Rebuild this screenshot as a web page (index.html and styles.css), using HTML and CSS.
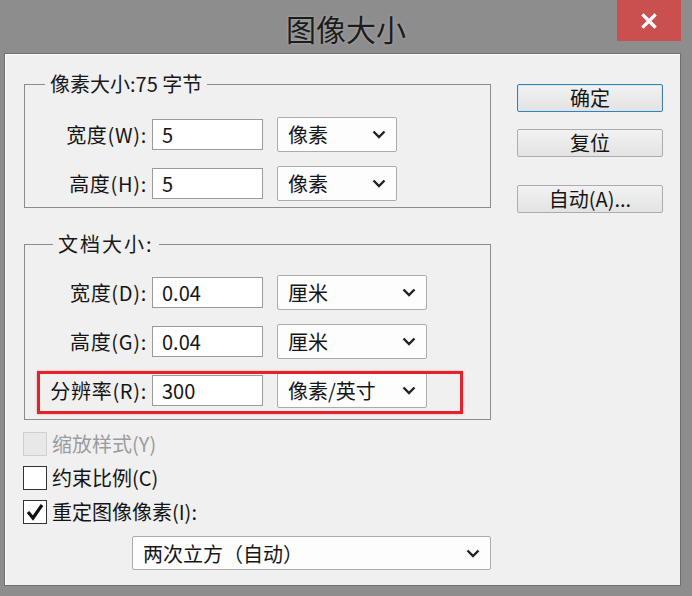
FILE: index.html
```html
<!DOCTYPE html>
<html lang="zh-CN">
<head>
<meta charset="utf-8">
<title>图像大小</title>
<link rel="stylesheet" href="styles.css">
</head>
<body>
<header class="titlebar">
  <h1 class="title">图像大小</h1>
  <button class="close" aria-label="关闭">
    <svg width="16" height="16" viewBox="0 0 16 16"><path d="M2.5 2.5L13.5 13.5M13.5 2.5L2.5 13.5" stroke="#fff" stroke-width="3.2" stroke-linecap="square"/></svg>
  </button>
</header>
<main class="dialog">
  <div class="left">
    <fieldset class="group g1">
      <legend>像素大小:75 字节</legend>
      <div class="rows">
        <div class="row">
          <span class="lbl">宽度(W):</span>
          <span class="input">5</span>
          <span class="select s-short"><span>像素</span><svg class="chev" width="14" height="9" viewBox="0 0 14 9"><polyline points="1.5,1.5 7,7 12.5,1.5" fill="none" stroke="#222" stroke-width="2.4"/></svg></span>
        </div>
        <div class="row">
          <span class="lbl">高度(H):</span>
          <span class="input">5</span>
          <span class="select s-short"><span>像素</span><svg class="chev" width="14" height="9" viewBox="0 0 14 9"><polyline points="1.5,1.5 7,7 12.5,1.5" fill="none" stroke="#222" stroke-width="2.4"/></svg></span>
        </div>
      </div>
    </fieldset>
    <fieldset class="group g2">
      <legend>文档大小:</legend>
      <div class="rows">
        <div class="row">
          <span class="lbl">宽度(D):</span>
          <span class="input">0.04</span>
          <span class="select s-long"><span>厘米</span><svg class="chev" width="14" height="9" viewBox="0 0 14 9"><polyline points="1.5,1.5 7,7 12.5,1.5" fill="none" stroke="#222" stroke-width="2.4"/></svg></span>
        </div>
        <div class="row">
          <span class="lbl">高度(G):</span>
          <span class="input">0.04</span>
          <span class="select s-long"><span>厘米</span><svg class="chev" width="14" height="9" viewBox="0 0 14 9"><polyline points="1.5,1.5 7,7 12.5,1.5" fill="none" stroke="#222" stroke-width="2.4"/></svg></span>
        </div>
        <div class="row marked">
          <span class="lbl">分辨率(R):</span>
          <span class="input">300</span>
          <span class="select s-long"><span>像素/英寸</span><svg class="chev" width="14" height="9" viewBox="0 0 14 9"><polyline points="1.5,1.5 7,7 12.5,1.5" fill="none" stroke="#222" stroke-width="2.4"/></svg></span>
          <span class="highlight"></span>
        </div>
      </div>
    </fieldset>
    <div class="checks">
      <div class="check disabled"><span class="box"></span><span class="ctext">缩放样式(Y)</span></div>
      <div class="check"><span class="box"></span><span class="ctext">约束比例(C)</span></div>
      <div class="check"><span class="box"><svg width="22" height="22" viewBox="0 0 22 22"><polyline points="4,11 9,17 18,4" fill="none" stroke="#111" stroke-width="3.2"/></svg></span><span class="ctext">重定图像像素(I):</span></div>
    </div>
    <span class="select s-bottom"><span>两次立方（自动）</span><svg class="chev" width="14" height="9" viewBox="0 0 14 9"><polyline points="1.5,1.5 7,7 12.5,1.5" fill="none" stroke="#222" stroke-width="2.4"/></svg></span>
  </div>
  <div class="buttons">
    <button class="btn default">确定</button>
    <button class="btn reset">复位</button>
    <button class="btn auto">自动(A)...</button>
  </div>
</main>
</body>
</html>
```
FILE: styles.css
```css
* { box-sizing: border-box; }
html, body { margin: 0; padding: 0; }
body {
  width: 692px;
  height: 596px;
  overflow: hidden;
  background: #8d8d8d;
  font-family: "Noto Sans CJK SC", "Microsoft YaHei", sans-serif;
  color: #151515;
  font-size: 20px;
}

.titlebar {
  display: grid;
  grid-template-columns: 1fr auto 1fr;
  height: 53px;
}
.title {
  grid-column: 2;
  margin: 0;
  padding-top: 2px;
  font-size: 30px;
  font-weight: 400;
  line-height: 52px;
  color: #1c1c1c;
  text-shadow: 0 0 3px rgba(255,255,255,0.35);
}
.close {
  grid-column: 3;
  justify-self: end;
  margin-right: 11px;
  width: 64px;
  height: 41px;
  border: none;
  padding: 0;
  background: #c9504f;
  display: flex;
  align-items: center;
  justify-content: center;
}

.dialog {
  display: flex;
  margin: 0 11px 0 4px;
  height: 533px;
  border: 1px solid #6f6f6f;
  background: #f0f0f0;
  box-shadow: inset 1px 1px 0 #fdfdfd;
}

.left {
  width: 486px;
  padding: 20px 0 0 19px;
  display: flex;
  flex-direction: column;
  align-items: flex-start;
}

.group {
  margin: 0;
  width: 467px;
  border: 1px solid #8c8c8c;
  min-width: 0;
}
.group legend {
  font-size: 20px;
  line-height: 20px;
  padding: 0 5px;
  color: #181818;
}
.g1 { padding: 23px 0 6px 0; }
.g1 legend { margin-left: 20px; }
.g2 { margin-top: 26px; padding: 21px 0 11px 0; }
.g2 legend { margin-left: 28px; letter-spacing: 2px; }

.rows {
  display: flex;
  flex-direction: column;
  gap: 14px;
}
.row {
  display: flex;
  align-items: center;
  height: 35px;
}
.lbl {
  width: 122px;
  text-align: right;
  line-height: 24px;
  letter-spacing: 0.7px;
  white-space: nowrap;
}
.input {
  margin-left: 5px;
  width: 111px;
  height: 31px;
  border: 1px solid #9a9a9a;
  background: #fff;
  padding-left: 9px;
  line-height: 29px;
  font-size: 20px;
}
.select {
  display: flex;
  align-items: center;
  justify-content: space-between;
  height: 35px;
  border: 1px solid #acacac;
  border-radius: 2px;
  background: #fdfdfd;
  padding: 0 10px;
  line-height: 33px;
  white-space: nowrap;
}
.s-short { margin-left: 14px; width: 120px; }
.s-long { margin-left: 14px; width: 150px; }
.chev { flex: none; }

.marked { position: relative; }
.highlight {
  position: absolute;
  left: 12px;
  right: 27px;
  top: -2px;
  bottom: -6px;
  border: 3px solid #e3222c;
  box-shadow: 0 0 2px rgba(240, 60, 60, 0.45);
  pointer-events: none;
}

.checks {
  margin-top: 12px;
  display: flex;
  flex-direction: column;
  gap: 10px;
}
.check {
  display: flex;
  align-items: center;
  height: 24px;
  margin-left: -1px;
}
.box {
  width: 24px;
  height: 24px;
  border: 1px solid #333;
  background: #fff;
  display: flex;
  align-items: center;
  justify-content: center;
}
.ctext {
  margin-left: 5px;
  line-height: 24px;
  white-space: nowrap;
}
.check.disabled .box {
  border-color: #cfcfcf;
  background: #e8e8e8;
}
.check.disabled .ctext { color: #9c9c9c; }

.s-bottom {
  margin-top: 12px;
  margin-left: 108px;
  width: 359px;
  height: 34px;
}

.buttons {
  margin-left: 26px;
  width: 146px;
  padding-top: 30px;
  display: flex;
  flex-direction: column;
}
.btn {
  height: 28px;
  padding: 0;
  border: 1px solid #acacac;
  border-radius: 2px;
  background: linear-gradient(#f2f2f2, #e3e3e3);
  font-family: inherit;
  font-size: 20px;
  line-height: 26px;
  color: #151515;
}
.btn.default {
  border-color: #3c7fb1;
  box-shadow: inset 0 0 0 1px #cfe6f7;
}
.btn.reset { margin-top: 17px; }
.btn.auto { margin-top: 28px; }
```
